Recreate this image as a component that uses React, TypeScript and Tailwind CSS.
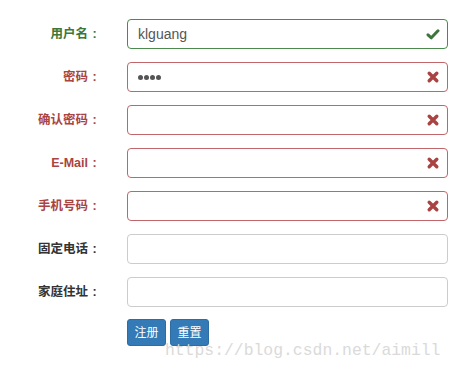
import React from "react";

type Status = "ok" | "err" | "none";

const Check = () => (
  <svg width="14" height="14" viewBox="0 0 14 14">
    <path d="M2 7.8 L5.3 10.8 L12 3.8" fill="none" stroke="#3c763d" strokeWidth="3" strokeLinecap="round" strokeLinejoin="round" />
  </svg>
);

const Cross = () => (
  <svg width="14" height="14" viewBox="0 0 14 14">
    <path d="M3.2 3.2 L10.8 10.8 M10.8 3.2 L3.2 10.8" fill="none" stroke="#a94442" strokeWidth="3.4" strokeLinecap="round" />
  </svg>
);

function Row({ label, status, value, password }: { label: string; status: Status; value?: string; password?: boolean }) {
  const labelColor = status === "ok" ? "text-[#3c763d]" : status === "err" ? "text-[#a94442]" : "text-[#333333]";
  const border = status === "ok" ? "border-[#4b8a4c]" : status === "err" ? "border-[#c0666a]" : "border-[#cccccc]";
  return (
    <div className="flex items-center h-[30px]">
      <div className={`w-[101px] flex justify-end items-center text-[12.5px] font-bold leading-none ${labelColor}`}>
        <span>{label}</span>
        <span className="w-[13px] text-center" style={{ fontFamily: '"Liberation Sans", Arial, sans-serif' }}>:</span>
      </div>
      <div className={`ml-[26px] w-[321px] h-[30px] border ${border} rounded-[4px] bg-white flex items-center pl-[10px] pr-[7px]`}>
        <div className="flex-1 text-[14px] text-[#555555] leading-none">
          {password ? (
            <span className="flex gap-[1px]">
              <span className="w-[5px] h-[5px] rounded-full bg-[#555]" />
              <span className="w-[5px] h-[5px] rounded-full bg-[#555]" />
              <span className="w-[5px] h-[5px] rounded-full bg-[#555]" />
              <span className="w-[5px] h-[5px] rounded-full bg-[#555]" />
            </span>
          ) : (
            value
          )}
        </div>
        {status === "ok" && <Check />}
        {status === "err" && <Cross />}
      </div>
    </div>
  );
}

export default function App() {
  return (
    <div
      className="relative w-[455px] h-[374px] bg-white overflow-hidden"
      style={{ fontFamily: '"Liberation Sans", Arial, "Noto Sans CJK SC", sans-serif' }}
    >
      <div className="pt-[19px] flex flex-col gap-[13px]">
        <Row label="用户名" status="ok" value="klguang" />
        <Row label="密码" status="err" password />
        <Row label="确认密码" status="err" />
        <Row label="E-Mail" status="err" />
        <Row label="手机号码" status="err" />
        <Row label="固定电话" status="none" />
        <Row label="家庭住址" status="none" />
      </div>
      <div className="mt-[12px] ml-[127px] flex gap-[4px]">
        <button className="h-[27px] w-[39px] rounded-[3px] bg-[#337ab7] border border-[#2e6da4] text-white text-[12px] leading-none">注册</button>
        <button className="h-[27px] w-[39px] rounded-[3px] bg-[#337ab7] border border-[#2e6da4] text-white text-[12px] leading-none">重置</button>
      </div>
      <div
        className="absolute left-[165px] top-[343px] text-[16.4px] text-[#dadada] leading-none whitespace-nowrap"
        style={{ fontFamily: '"Liberation Mono", "Courier New", monospace' }}
      >
        https://blog.csdn.net/aimill
      </div>
    </div>
  );
}
